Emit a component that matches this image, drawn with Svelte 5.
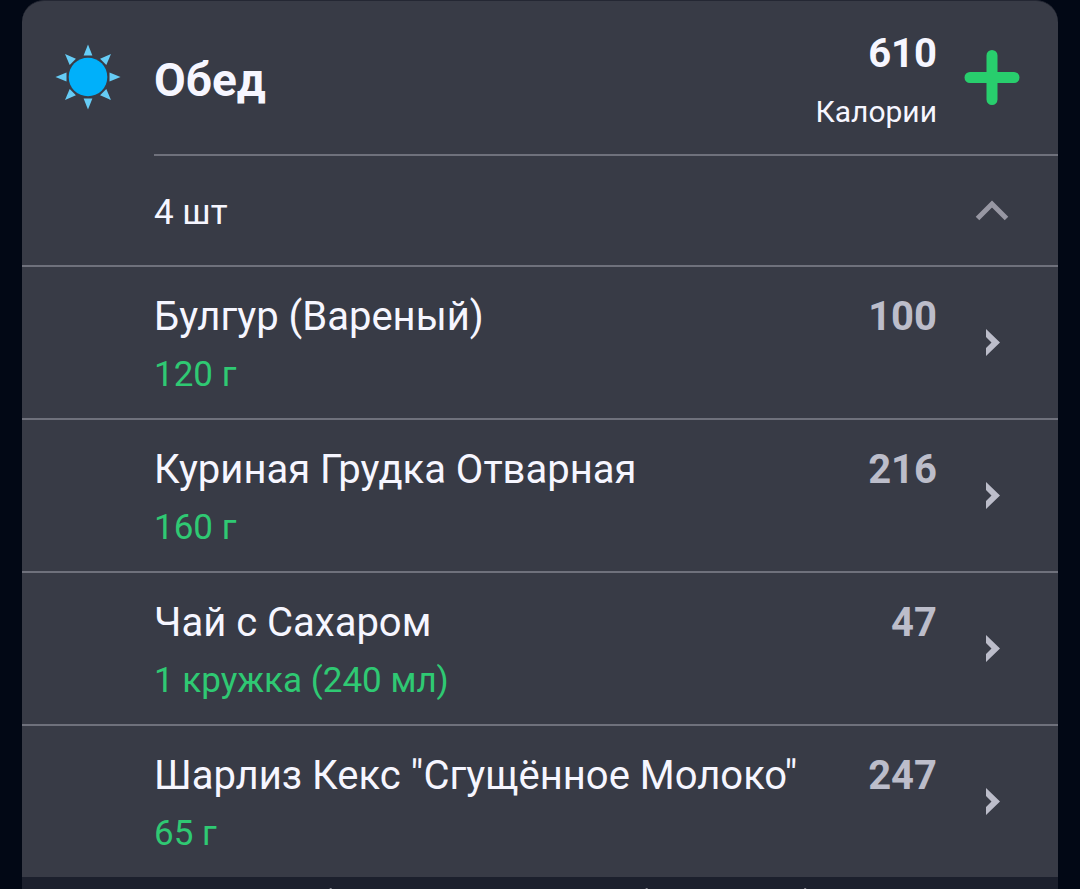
<script>
  let expanded = $state(true);

  const items = [
    { name: 'Булгур (Вареный)', amount: '120 г', calories: 100 },
    { name: 'Куриная Грудка Отварная', amount: '160 г', calories: 216 },
    { name: 'Чай с Сахаром', amount: '1 кружка (240 мл)', calories: 47 },
    { name: 'Шарлиз Кекс "Сгущённое Молоко"', amount: '65 г', calories: 247 },
  ];

  const total = items.reduce((sum, item) => sum + item.calories, 0);
  const rays = [0, 45, 90, 135, 180, 225, 270, 315];
  const ticks = ['29.7%', '60.2%', '75.5%'];
</script>

<main>
  <section class="card">
    <header>
      <svg class="sun" viewBox="-33 -33 66 66" aria-hidden="true">
        <circle r="19.300" />
        {#each rays as angle}
          <path d="M0 -32.500L4.400 -21.500H-4.400z" transform="rotate({angle})" />
        {/each}
      </svg>
      <div class="heading">
        <h2>Обед</h2>
        <div class="total">
          <strong>{total}</strong>
          <span>Калории</span>
        </div>
        <button class="add" aria-label="Добавить">
          <svg width="56" height="56" viewBox="0 0 56 56">
            <path d="M28 5.500V49.500M6 27.500H50" />
          </svg>
        </button>
      </div>
    </header>

    <button
      class="summary"
      aria-expanded={expanded}
      onclick={() => (expanded = !expanded)}
    >
      <span>{items.length} шт</span>
      <svg class:collapsed={!expanded} width="34" height="22" viewBox="0 0 34 22">
        <path d="M2.500 18.500L17 4L31.500 18.500" />
      </svg>
    </button>

    {#if expanded}
      <ul>
        {#each items as item}
          <li>
            <button class="item">
              <span class="info">
                <span class="name">{item.name}</span>
                <span class="amount">{item.amount}</span>
              </span>
              <span class="calories">{item.calories}</span>
              <svg width="16" height="28" viewBox="0 0 16 28">
                <path d="M2 0L16 13.500L2 27V19L7.500 13.500L2 8z" />
              </svg>
            </button>
          </li>
        {/each}
      </ul>
    {/if}

    <footer>
      <svg width="100%" height="1" aria-hidden="true">
        {#each ticks as x}
          <rect {x} width="2" height="1" />
        {/each}
      </svg>
    </footer>
  </section>
</main>

<style>
  :global(body) {
    background: #020815;
  }

  main {
    padding: 0 22px;
    font-family: Roboto, sans-serif;
    color: #f6f6ff;
  }

  .card {
    background: #383b46;
    border-top: 1px solid #242733;
    border-radius: 22px 22px 0 0;
    overflow: hidden;
  }

  button {
    margin: 0;
    padding: 0;
    border: none;
    background: none;
    font: inherit;
    color: inherit;
    text-align: left;
    cursor: pointer;
  }

  header {
    display: grid;
    grid-template-columns: 132px 1fr;
    align-items: center;
  }

  .sun {
    width: 66px;
    height: 66px;
    margin-bottom: 4px;
    justify-self: center;
  }

  .sun circle {
    fill: #00b0fa;
  }

  .sun path {
    fill: #66ccf5;
  }

  .heading {
    display: grid;
    grid-template-columns: 1fr auto 110px;
    align-items: center;
    min-height: 153px;
    padding-right: 11px;
    border-bottom: 2px solid #6f717c;
  }

  h2 {
    margin: 0;
    padding-top: 4px;
    font-size: 46px;
    line-height: 56px;
    font-weight: 700;
  }

  .total {
    display: flex;
    flex-direction: column;
    gap: 16px;
    padding-top: 4px;
    text-align: right;
  }

  .total strong {
    font-size: 40px;
    line-height: 48px;
  }

  .total span {
    font-size: 30px;
    line-height: 36px;
  }

  .add {
    justify-self: center;
    display: flex;
  }

  .add path {
    fill: none;
    stroke: #28ce6d;
    stroke-width: 11;
    stroke-linecap: round;
  }

  .summary {
    display: grid;
    grid-template-columns: 1fr 110px;
    align-items: center;
    width: 100%;
    min-height: 111px;
    padding: 0 11px 0 132px;
    border-bottom: 2px solid #6f717c;
    font-size: 35px;
    line-height: 44px;
  }

  .summary span {
    padding-top: 4px;
  }

  .summary svg {
    justify-self: center;
  }

  .summary svg.collapsed {
    transform: rotate(180deg);
  }

  .summary path {
    fill: none;
    stroke: #9797a3;
    stroke-width: 5;
  }

  ul {
    margin: 0;
    padding: 0;
    list-style: none;
  }

  li + li {
    border-top: 2px solid #6f717c;
  }

  .item {
    display: grid;
    grid-template-columns: 1fr auto 110px;
    align-items: center;
    width: 100%;
    padding: 22px 11px 21px 132px;
  }

  .info {
    display: flex;
    flex-direction: column;
    gap: 12px;
    padding-top: 4px;
  }

  .name {
    font-size: 40px;
    line-height: 48px;
  }

  .amount {
    font-size: 35px;
    line-height: 44px;
    color: #2fc973;
  }

  .calories {
    align-self: start;
    padding-top: 4px;
    font-size: 40px;
    line-height: 48px;
    font-weight: 700;
    color: #bcbdca;
  }

  .item svg {
    justify-self: center;
    fill: #bcbdca;
  }

  footer {
    padding-top: 11px;
    background: #1c202d;
  }

  footer svg {
    display: block;
    fill: #85868f;
  }
</style>
